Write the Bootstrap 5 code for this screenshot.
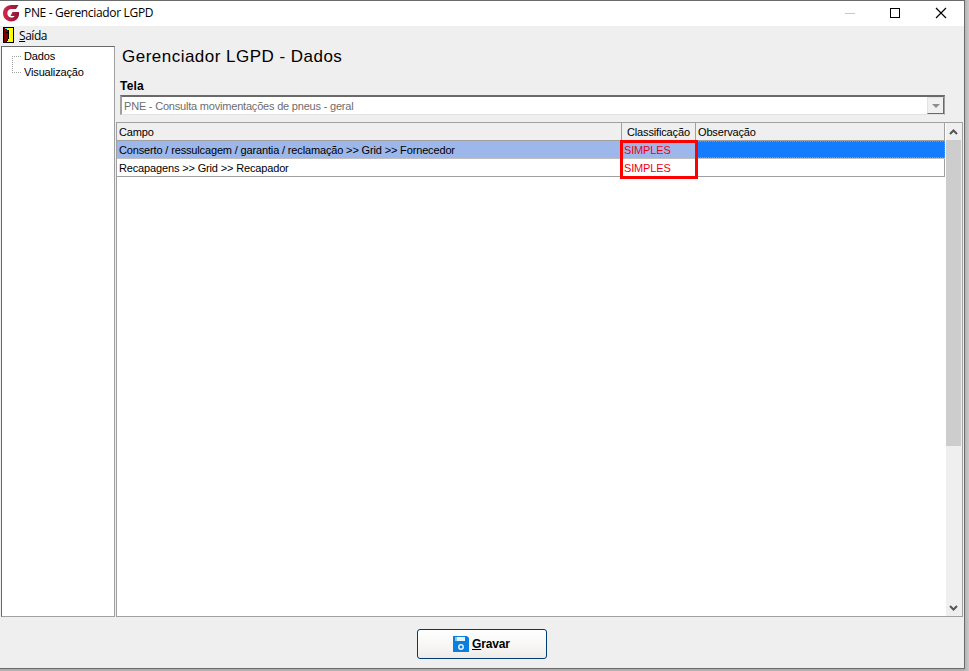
<!DOCTYPE html>
<html lang="pt-BR">
<head>
  <meta charset="UTF-8">
  <meta name="viewport" content="width=device-width, initial-scale=1.0">
  <title>PNE - Gerenciador LGPD</title>
  <link href="https://cdn.jsdelivr.net/npm/bootstrap@5.3.0/dist/css/bootstrap.min.css" rel="stylesheet">
  <style>
    body {
      height: 671px;
      background: linear-gradient(90deg, #b0b0b0 964px, #c9c9c9 969px);
      color: #000;
      font-family: "Liberation Sans", Arial, sans-serif;
      font-size: 11px;
      letter-spacing: -.15px;
      line-height: 16px;
      overflow: hidden;
    }
    svg { display: block; flex: none; }
    .app-window {
      width: 965px;
      height: 669px;
      background: #efefef;
      border: solid #6b6b6b;
      border-width: 1px 1px 1px 0;
    }
    .title-bar {
      height: 25px;
      padding-left: 3px;
      font-family: "Open Sans", sans-serif;
      font-size: 12px;
    }
    .title-text { letter-spacing: -.33px; margin: -1px 0 0 5px; }
    .menu-bar {
      height: 20px;
      padding-left: 3px;
      font-family: "Open Sans", sans-serif;
      font-size: 12px;
    }
    .menu-bar span { letter-spacing: -.45px; margin: -1px 0 0 5px; }
    .menu-bar svg { margin-top: -2px; }
    .work-area { height: 571px; }
    .tree-box {
      width: 114px;
      margin: 0 1px;
      border: 1px solid #a0a0a0;
      border-left-color: #696969;
      border-top-color: #696969;
      padding: 1px 0 0 10px;
    }
    .tree-box ul { margin-left: 1px; line-height: 16px; }
    .page-title { font-size: 17px; line-height: 20px; margin: 1px 0 0 6px; letter-spacing: .48px; }
    .field-label { font-size: 12px; font-weight: 700; margin: 11px 0 0 4px; line-height: 16px; letter-spacing: .2px; }
    .combo-box {
      width: 825px;
      height: 20px;
      margin: 1px 0 0 4px;
      border: 2px solid #a0a0a0;
      border-top-color: #696969;
      border-right: 1px solid #a0a0a0;
      border-bottom: 1px solid #e3e3e3;
      color: #6d6d6d;
      line-height: 18px;
      letter-spacing: -.2px;
      padding-left: 2px;
    }
    .combo-arrow {
      width: 17px;
      background: #f0f0f0;
      border: 1px solid #e3e3e3;
      border-right-color: #696969;
      border-bottom-color: #696969;
    }
    .data-panel {
      width: 847px;
      height: 495px;
      margin-top: 7px;
      border: 1px solid #a0a0a0;
    }
    .data-grid { width: 828px; }
    .grid-line {
      display: grid;
      grid-template-columns: 505px 74px 249px;
      height: 18px;
      line-height: 19px;
      border-bottom: 1px solid #a0a0a0;
    }
    .grid-line > div { height: 17px; border-right: 1px solid #a0a0a0; padding-left: 2px; white-space: nowrap; }
    .grid-line > .head-class { padding-left: 5px; }
    .grid-head { background: #efefef; }
    .row-active { background: #9db7ea; border-bottom-color: #c0c0c0; }
    .row-active .cell-focus { background: #147cff; outline: 1px dotted #d8861f; outline-offset: -1px; border-right-color: #147cff; }
    .txt-flag { color: #f00010; }
    .flag-frame { left: 503px; top: 17px; width: 78px; height: 39px; border: 3px solid red; }
    .scroll-track { width: 16px; background: #efefef; }
    .scroll-thumb { height: 306px; width: 15px; background: #cdcdcd; }
    .btn-save {
      width: 130px;
      height: 30px;
      margin: 12px 0 0 417px;
      padding: 0 0 0 35px;
      border: 1px solid #003c74;
      border-radius: 3px;
      background: linear-gradient(#fff, #f6f5f3 65%, #eeebe7);
      color: #000;
      font-size: 12px;
      font-weight: 700;
      letter-spacing: -.15px;
    }
    .btn-save span { margin-left: 3px; }
  </style>
</head>
<body>
  <div class="app-window">
    <div class="title-bar d-flex align-items-center bg-white">
      <svg width="16" height="17" viewBox="0 0 16 17">
        <defs><linearGradient id="brand"><stop stop-color="#d6274c"/><stop offset="1" stop-color="#8b1538"/></linearGradient></defs>
        <path fill="url(#brand)" d="M15.500 0L13 4H8.500C6 4 4.300 5.800 4.300 8.300s1.700 4.300 4.200 4.300c1.500 0 2.500-.600 3-1.600H7.500l2-4H16v2.500c-.300 4-3.500 7-7.800 7C3.500 16.500 0 13 0 8.300S3.500 0 8.200 0z"/>
      </svg>
      <span class="title-text">PNE - Gerenciador LGPD</span>
      <svg class="ms-auto" width="124" height="25" viewBox="840 1 124 25" fill="none" shape-rendering="crispEdges">
        <path d="M845 13.500h10" stroke="#c8c8c8"/>
        <rect x="890.500" y="8.500" width="9" height="9" stroke="#000"/>
        <path d="M936 8l10 10M946 8l-10 10" stroke="#000" shape-rendering="auto" stroke-width="1.200"/>
      </svg>
    </div>
    <div class="menu-bar d-flex align-items-center">
      <svg width="11" height="16" viewBox="0 0 11 16" shape-rendering="crispEdges">
        <path d="M0 0h11v16H0z"/>
        <path fill="#ff0" d="M4 1h6v14H4z"/>
        <path fill="#800000" d="M1 1h1l3 2v10l-2 2H1z"/>
        <path fill="#0ff" d="M2 1h2v1H2z"/>
        <path fill="#000" d="M5 3h1v9H5zM4 12h1v2H4zM3 5h2v1H3z"/>
      </svg>
      <span><u>S</u>aída</span>
    </div>
    <div class="work-area d-flex">
      <div class="tree-box bg-white d-flex align-items-start">
        <svg width="11" height="28" viewBox="0 0 11 28"><path d="M.5 8v18M0 8.500h9M0 24.500h9" fill="none" stroke="#a0a0a0" stroke-dasharray="1 1"/></svg>
        <ul class="list-unstyled mb-0">
          <li>Dados</li>
          <li>Visualização</li>
        </ul>
      </div>
      <main>
        <h1 class="page-title fw-normal">Gerenciador LGPD - Dados</h1>
        <div class="field-label">Tela</div>
        <div class="combo-box bg-white d-flex justify-content-between">
          <span>PNE - Consulta movimentações de pneus - geral</span>
          <div class="combo-arrow d-flex align-items-center justify-content-center">
            <svg width="8" height="4" viewBox="0 0 8 4"><path d="M0 0h8L4 4z" fill="#8c8c8c"/></svg>
          </div>
        </div>
        <div class="data-panel bg-white d-flex justify-content-between">
          <div class="data-grid position-relative">
            <div class="grid-line grid-head">
              <div>Campo</div>
              <div class="head-class">Classificação</div>
              <div>Observação</div>
            </div>
            <div class="grid-line row-active">
              <div>Conserto / ressulcagem / garantia / reclamação &gt;&gt; Grid &gt;&gt; Fornecedor</div>
              <div class="txt-flag">SIMPLES</div>
              <div class="cell-focus"></div>
            </div>
            <div class="grid-line">
              <div>Recapagens &gt;&gt; Grid &gt;&gt; Recapador</div>
              <div class="txt-flag">SIMPLES</div>
              <div></div>
            </div>
            <div class="flag-frame position-absolute"></div>
          </div>
          <div class="scroll-track d-flex flex-column">
            <svg width="15" height="17" viewBox="0 0 15 17"><path d="M4 11l3.500-3.500L11 11" fill="none" stroke="#555" stroke-width="2"/></svg>
            <div class="scroll-thumb"></div>
            <svg class="mt-auto" width="15" height="17" viewBox="0 0 15 17"><path d="M4 7l3.500 3.500L11 7" fill="none" stroke="#555" stroke-width="2"/></svg>
          </div>
        </div>
      </main>
    </div>
    <button class="btn-save d-flex align-items-center">
      <svg width="16" height="16" viewBox="0 0 16 16">
        <path fill="#0b7fe0" d="M0 0h14l2 2v14H0z"/>
        <path fill="#e8f3fd" d="M2 1h10v4H2z"/>
        <path fill="#8cc4f4" d="M2 1h2v4H2z"/>
        <circle cx="8" cy="11" r="2.200" fill="none" stroke="#e8f3fd" stroke-width="1.500"/>
      </svg>
      <span><u>G</u>ravar</span>
    </button>
  </div>
  <script src="https://cdn.jsdelivr.net/npm/bootstrap@5.3.0/dist/js/bootstrap.bundle.min.js"></script>
</body>
</html>
